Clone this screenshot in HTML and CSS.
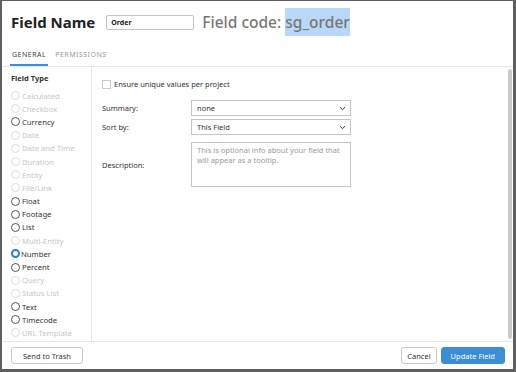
FILE: index.html
```html
<!DOCTYPE html>
<html>
<head>
<meta charset="UTF-8">
<link rel="stylesheet" href="styles.css">
</head>
<body>
<div class="dialog">
	<div class="header">
		<h1 class="title">Field Name</h1>
		<div class="name-input">Order</div>
		<div class="code">Field code: <span class="code-value">sg_order</span></div>
	</div>

	<div class="tabs">
		<div class="tab active">GENERAL</div>
		<div class="tab">PERMISSIONS</div>
	</div>

	<div class="main">
		<div class="types">
			<div class="types-title">Field Type</div>
			<div class="radio disabled"><span class="dot"></span>Calculated</div>
			<div class="radio disabled"><span class="dot"></span>Checkbox</div>
			<div class="radio"><span class="dot"></span>Currency</div>
			<div class="radio disabled"><span class="dot"></span>Date</div>
			<div class="radio disabled"><span class="dot"></span>Date and Time</div>
			<div class="radio disabled"><span class="dot"></span>Duration</div>
			<div class="radio disabled"><span class="dot"></span>Entity</div>
			<div class="radio disabled"><span class="dot"></span>File/Link</div>
			<div class="radio"><span class="dot"></span>Float</div>
			<div class="radio"><span class="dot"></span>Footage</div>
			<div class="radio"><span class="dot"></span>List</div>
			<div class="radio disabled"><span class="dot"></span>Multi-Entity</div>
			<div class="radio checked"><span class="dot"></span>Number</div>
			<div class="radio"><span class="dot"></span>Percent</div>
			<div class="radio disabled"><span class="dot"></span>Query</div>
			<div class="radio disabled"><span class="dot"></span>Status List</div>
			<div class="radio"><span class="dot"></span>Text</div>
			<div class="radio"><span class="dot"></span>Timecode</div>
			<div class="radio disabled"><span class="dot"></span>URL Template</div>
		</div>

		<div class="settings">
			<div class="check-row"><span class="box"></span>Ensure unique values per project</div>
			<div class="form-row first">
				<div class="label">Summary:</div>
				<div class="select">none<svg class="chev" width="7" height="5" viewBox="0 0 7 5"><path d="M1 1.2 L3.5 3.6 L6 1.2" fill="none" stroke="#333" stroke-width="1"/></svg></div>
			</div>
			<div class="form-row">
				<div class="label">Sort by:</div>
				<div class="select">This Field<svg class="chev" width="7" height="5" viewBox="0 0 7 5"><path d="M1 1.2 L3.5 3.6 L6 1.2" fill="none" stroke="#333" stroke-width="1"/></svg></div>
			</div>
			<div class="form-row desc-row">
				<div class="label">Description:</div>
				<div class="textarea">This is optional info about your field that will appear as a tooltip.</div>
			</div>
		</div>

		<div class="scrollbar"><div class="thumb"></div></div>
	</div>

	<div class="footer">
		<button class="btn">Send to Trash</button>
		<div class="spacer"></div>
		<button class="btn cancel">Cancel</button>
		<button class="btn primary">Update Field</button>
	</div>
</div>
</body>
</html>
```

FILE: styles.css
```css
html, body {
	margin: 0;
	padding: 0;
}

body {
	background-color: #5f5f5f;
	font-family: 'Noto Sans', sans-serif;
	color: #333;
	width: 516px;
	height: 372px;
	overflow: hidden;
}

.dialog {
	margin: 1px 3px 0 2px;
	width: 511px;
	height: 368px;
	background-color: white;
	display: flex;
	flex-direction: column;
}

/* header */
.header {
	height: 42px;
	display: flex;
	align-items: center;
	padding-left: 9px;
}

.title {
	margin: 0;
	font-size: 15px;
	font-weight: bold;
	color: #222;
}

.name-input {
	margin-left: 11px;
	width: 82px;
	height: 13px;
	border: 1px solid #c4c4c4;
	border-radius: 2px;
	padding-left: 4px;
	font-size: 7px;
	font-weight: bold;
	line-height: 13px;
	color: #222;
}

.code {
	margin-left: 8px;
	font-size: 15.5px;
	font-weight: 500;
	color: #777;
}

.code-value {
	background-color: #b9d7f7;
	padding: 3px 0;
}

/* tabs */
.tabs {
	display: flex;
	padding-left: 8px;
	border-bottom: 1px solid #e6e6e6;
	height: 23px;
}

.tab {
	font-size: 7px;
	color: #999;
	letter-spacing: 0.5px;
	padding: 7px 2px 0 2px;
	margin-right: 5px;
}

.tab.active {
	color: #444;
	border-bottom: 2px solid #3a8fd8;
}

/* body */
.main {
	flex: 1;
	display: flex;
	position: relative;
}

.types {
	width: 80px;
	padding-left: 9px;
	border-right: 1px solid #e8e8e8;
}

.types-title {
	font-size: 7.5px;
	font-weight: bold;
	color: #333;
	margin-top: 6px;
	margin-bottom: 6px;
}

.radio {
	display: flex;
	align-items: center;
	height: 13.2px;
	font-size: 7.7px;
	color: #333;
}

.dot {
	width: 9px;
	height: 9px;
	border: 1px solid #555;
	border-radius: 50%;
	margin-right: 2px;
	box-sizing: border-box;
	flex: none;
}

.radio.disabled {
	color: #c6c6c6;
}

.radio.disabled .dot {
	border-color: #dcdcdc;
}

.radio.checked .dot {
	border: 2.5px solid #2a7fd4;
	margin-right: 1px;
}

.settings {
	padding-left: 10px;
	padding-top: 12px;
	width: 260px;
}

.check-row {
	display: flex;
	align-items: center;
	font-size: 7.5px;
}

.box {
	width: 9px;
	height: 9px;
	border: 1px solid #ccc;
	box-sizing: border-box;
	margin-right: 3px;
}

.form-row {
	display: flex;
	align-items: center;
	margin-top: 3px;
}

.form-row.first {
	margin-top: 11px;
}

.label {
	width: 89px;
	font-size: 7.5px;
}

.select {
	width: 160px;
	height: 16px;
	border: 1px solid #c4c4c4;
	box-sizing: border-box;
	font-size: 7.5px;
	display: flex;
	align-items: center;
	justify-content: space-between;
	padding: 0 4px 0 5px;
}

.desc-row {
	margin-top: 7px;
}

.textarea {
	width: 160px;
	height: 45px;
	border: 1px solid #c4c4c4;
	box-sizing: border-box;
	font-size: 7.5px;
	color: #999;
	padding: 2px 5px;
	line-height: 10px;
}

.scrollbar {
	position: absolute;
	right: 1px;
	top: 2px;
	bottom: 2px;
	width: 4px;
}

.thumb {
	height: 100%;
	background-color: #c9c9c9;
	border-radius: 2px;
}

/* footer */
.footer {
	height: 27px;
	border-top: 1px solid #e6e6e6;
	display: flex;
	align-items: center;
	padding: 0 8px 0 9px;
}

.spacer {
	flex: 1;
}

.btn {
	font-family: 'Noto Sans', sans-serif;
	font-size: 7.5px;
	color: #333;
	background: white;
	border: 1px solid #c8c8c8;
	border-radius: 3px;
	height: 17px;
	padding: 0 11px;
}

.btn.cancel {
	padding: 0 5px;
	margin-right: 4px;
}

.btn.primary {
	background-color: #3b8dd6;
	border-color: #3b8dd6;
	color: white;
	padding: 0 9px;
}
```
